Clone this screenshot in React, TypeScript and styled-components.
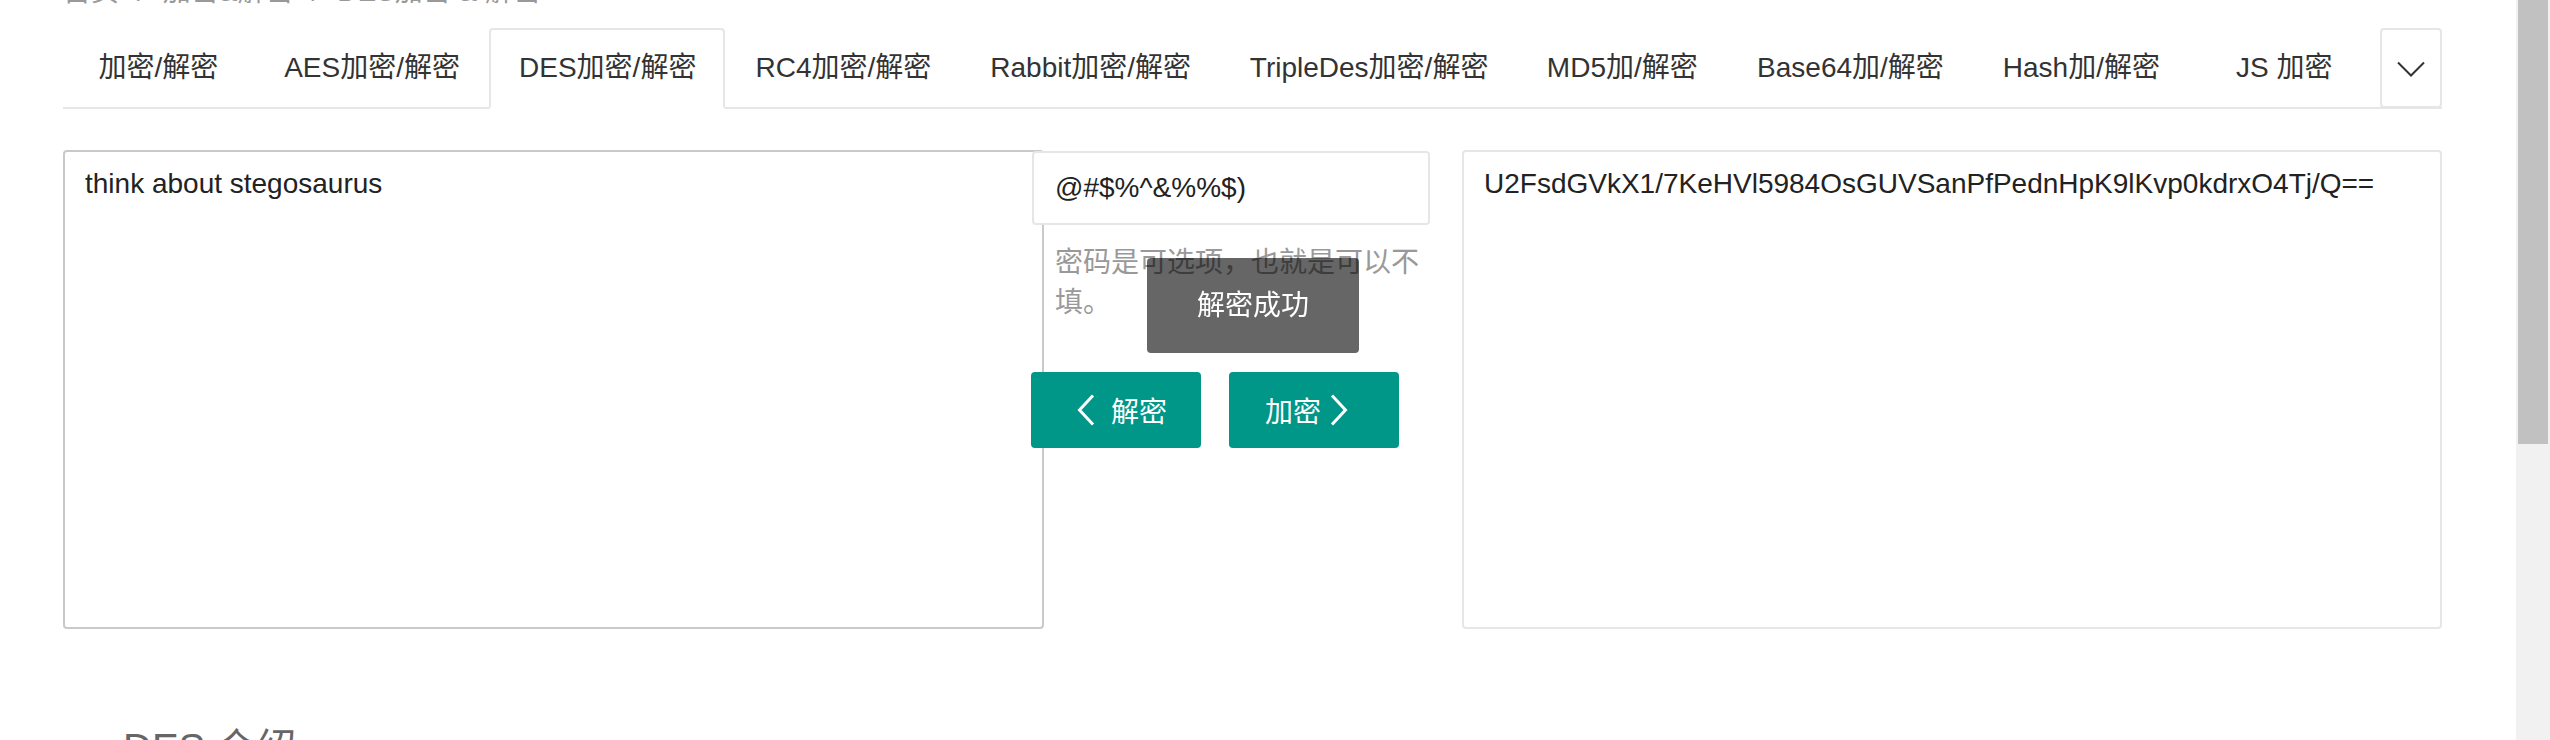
import React from 'react'
import styled, { createGlobalStyle, css } from 'styled-components'

const GlobalStyle = createGlobalStyle`
  html, body {
    margin: 0;
    padding: 0;
    overflow: hidden;
    background: #fff;
  }
  body {
    font-family: "Liberation Sans", "Noto Sans CJK SC", sans-serif;
    color: #333;
  }
`

const FONT = `"Liberation Sans", "Noto Sans CJK SC", sans-serif`

const Page = styled.div`
  width: 2379px;
  padding-left: 63px;
`

const Breadcrumb = styled.div`
  margin-top: -28px;
  height: 40px;
  line-height: 40px;
  font-size: 28px;
  color: #999;
  white-space: nowrap;
`

const Crumb = styled.span``

const CrumbSep = styled.span`
  margin: 0 18px;
`

const TabBar = styled.div`
  margin-top: 16px;
  height: 79px;
  display: flex;
  border-bottom: 2px solid #e6e6e6;
`

const Tab = styled.div<{ $active?: boolean }>`
  position: relative;
  min-width: 130px;
  padding: 0 30.4px;
  line-height: 79px;
  font-size: 28px;
  text-align: center;
  white-space: nowrap;
  color: #333;

  ${(p) =>
    p.$active &&
    css`
      &::after {
        content: '';
        position: absolute;
        left: 0;
        top: 0;
        width: 100%;
        height: 81px;
        box-sizing: border-box;
        border: 2px solid #e6e6e6;
        border-bottom-color: #fff;
        border-radius: 4px 4px 0 0;
      }
    `}
`

const MoreButton = styled.div`
  margin-left: auto;
  width: 63px;
  height: 80px;
  box-sizing: border-box;
  border: 2px solid #e6e6e6;
  border-radius: 4px;
  background: #fff;
  display: flex;
  align-items: center;
  justify-content: center;
  padding-top: 2px;
`

const Workspace = styled.div`
  margin-top: 41px;
  display: grid;
  grid-template-columns: 981px 418px 980px;
  align-items: start;
`

const TextPane = styled.textarea<{ $border: string }>`
  display: block;
  box-sizing: border-box;
  width: 100%;
  height: 479px;
  margin: 0;
  padding: 12px 20px;
  border: 2px solid ${(p) => p.$border};
  border-radius: 4px;
  font-family: ${FONT};
  font-size: 28px;
  line-height: 40px;
  color: #222;
  background: #fff;
  resize: none;
  outline: none;
`

const CenterColumn = styled.div`
  position: relative;
  z-index: 1;
  margin-left: -12px;
  width: 398px;
  display: flex;
  flex-direction: column;
`

const KeyInput = styled.input`
  box-sizing: border-box;
  width: 100%;
  height: 74px;
  margin: 1px 0 0;
  padding: 0 21px;
  border: 2px solid #e6e6e6;
  border-radius: 4px;
  font-family: ${FONT};
  font-size: 28px;
  color: #222;
  background: #fff;
  outline: none;
`

const Hint = styled.div`
  padding: 18px 10px 0 23px;
  font-size: 28px;
  line-height: 40px;
  color: #999;
`

const ButtonRow = styled.div`
  display: flex;
  gap: 28px;
  margin: 49px 0 0 -1px;
`

const ActionButton = styled.button<{ $padLeft: number; $gap: number }>`
  display: flex;
  align-items: center;
  gap: ${(p) => p.$gap}px;
  box-sizing: border-box;
  width: 170px;
  height: 76px;
  padding: 0 0 0 ${(p) => p.$padLeft}px;
  border: none;
  border-radius: 4px;
  background: #009688;
  color: #fff;
  font-family: ${FONT};
  font-size: 28px;
  cursor: pointer;
`

const Toast = styled.div`
  position: fixed;
  left: 1147px;
  top: 258px;
  height: 95px;
  padding: 0 50px;
  line-height: 95px;
  font-size: 28px;
  color: #fff;
  background: rgba(0, 0, 0, 0.6);
  border-radius: 4px;
  white-space: nowrap;
  z-index: 5;
`

const IntroField = styled.div`
  margin-top: 91px;
  padding-left: 60px;
`

const IntroTitle = styled.div`
  font-size: 40px;
  line-height: 56px;
  color: #666;
`

const ScrollTrack = styled.div`
  position: fixed;
  top: 0;
  right: 0;
  width: 34px;
  height: 740px;
  background: #f1f1f1;
`

const ScrollThumb = styled.div`
  margin-left: 2px;
  width: 30px;
  height: 444px;
  background: #c1c1c1;
`

const TABS = [
  '加密/解密',
  'AES加密/解密',
  'DES加密/解密',
  'RC4加密/解密',
  'Rabbit加密/解密',
  'TripleDes加密/解密',
  'MD5加/解密',
  'Base64加/解密',
  'Hash加/解密',
  'JS 加密',
]

const Chevron = ({ dir }: { dir: 'left' | 'right' }) => (
  <svg width="18" height="32" viewBox="0 0 18 32" fill="none">
    <polyline
      points={dir === 'left' ? '16,1.5 2.5,16 16,30.5' : '2,1.5 15.5,16 2,30.5'}
      stroke="#fff"
      strokeWidth="3"
    />
  </svg>
)

export default function App() {
  return (
    <>
      <GlobalStyle />
      <Page>
        <Breadcrumb>
          <Crumb>首页</Crumb>
          <CrumbSep>/</CrumbSep>
          <Crumb>加密&amp;解密</Crumb>
          <CrumbSep>/</CrumbSep>
          <Crumb>DES加密 &amp; 解密</Crumb>
        </Breadcrumb>

        <TabBar>
          {TABS.map((t) => (
            <Tab key={t} $active={t === 'DES加密/解密'}>
              {t}
            </Tab>
          ))}
          <MoreButton>
            <svg width="28" height="16" viewBox="0 0 28 16" fill="none">
              <polyline points="1,1.5 14,14.5 27,1.5" stroke="#333" strokeWidth="2" />
            </svg>
          </MoreButton>
        </TabBar>

        <Workspace>
          <TextPane $border="#c9c9c9" readOnly defaultValue="think about stegosaurus" />

          <CenterColumn>
            <KeyInput readOnly defaultValue="@#$%^&%%$)" />
            <Hint>密码是可选项，也就是可以不填。</Hint>
            <ButtonRow>
              <ActionButton $padLeft={46} $gap={16}>
                <Chevron dir="left" />
                解密
              </ActionButton>
              <ActionButton $padLeft={36} $gap={9}>
                加密
                <Chevron dir="right" />
              </ActionButton>
            </ButtonRow>
          </CenterColumn>

          <TextPane
            $border="#e6e6e6"
            readOnly
            defaultValue="U2FsdGVkX1/7KeHVl5984OsGUVSanPfPednHpK9lKvp0kdrxO4Tj/Q=="
          />
        </Workspace>

        <IntroField>
          <IntroTitle>DES 介绍</IntroTitle>
        </IntroField>
      </Page>

      <Toast>解密成功</Toast>

      <ScrollTrack>
        <ScrollThumb />
      </ScrollTrack>
    </>
  )
}
